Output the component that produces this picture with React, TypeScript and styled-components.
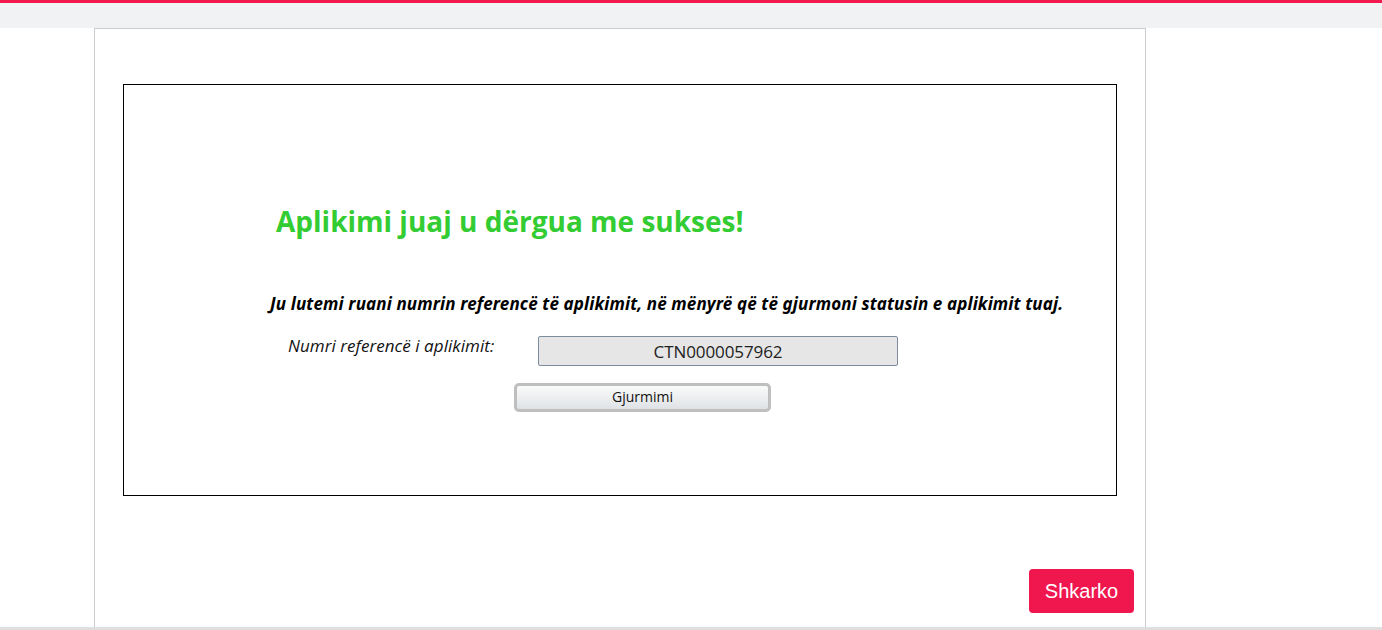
import React from "react";
import styled, { createGlobalStyle } from "styled-components";

const Global = createGlobalStyle`
  html, body { margin: 0; padding: 0; background: #fff; }
  body { font-family: "Open Sans", "Noto Sans", sans-serif; }
`;

const Page = styled.div`
  display: flex;
  flex-direction: column;
  min-height: 630px;
`;

const TopBar = styled.header`
  height: 25px;
  border-top: 3px solid #f2194f;
  background: #f1f2f4;
`;

const Main = styled.main`
  display: flex;
  padding-left: 94px;
`;

const Card = styled.section`
  box-sizing: border-box;
  width: 1052px;
  height: 599px;
  border: 1px solid #cccccc;
  border-bottom-width: 0;
  padding: 55px 28px 0 28px;
  display: flex;
  flex-direction: column;
`;

const Frame = styled.div`
  box-sizing: border-box;
  width: 994px;
  height: 412px;
  border: 1px solid #000;
  display: flex;
  flex-direction: column;
  padding-top: 118px;
`;

const Title = styled.h1`
  margin: 0 0 0 152px;
  font-family: "Open Sans", sans-serif;
  font-weight: 700;
  font-size: 28px;
  line-height: 36px;
  color: #33cc33;
  letter-spacing: 0;
`;

const Notice = styled.p`
  margin: 55px 0 0 146px;
  font-family: "Noto Sans", sans-serif;
  font-style: italic;
  font-weight: 700;
  font-size: 17px;
  line-height: 20px;
  letter-spacing: 0.13px;
  color: #000;
`;

const Row = styled.div`
  display: flex;
  align-items: flex-start;
  margin: 22px 0 0 164px;
`;

const Label = styled.span`
  width: 250px;
  font-family: "Open Sans", sans-serif;
  font-style: italic;
  font-size: 17px;
  line-height: 20px;
  color: #111;
  letter-spacing: 0.05px;
`;

const RefBox = styled.div`
  box-sizing: border-box;
  width: 360px;
  height: 30px;
  background: #e6e6e6;
  border: 1px solid #7d8c9c;
  border-radius: 2px;
  display: flex;
  align-items: center;
  justify-content: center;
  font-family: "Open Sans", sans-serif;
  font-size: 17px;
  color: #222;
  letter-spacing: -0.1px;
`;

const ActionRow = styled.div`
  display: flex;
  margin: 17px 0 0 390px;
`;

const TrackButton = styled.button`
  box-sizing: border-box;
  width: 257px;
  height: 29px;
  border: 3px solid #bfbfbf;
  border-radius: 5px;
  background: linear-gradient(#fafbfb, #dfe2e5);
  font-family: "Open Sans", sans-serif;
  font-size: 14px;
  color: #111;
  padding: 0 0 2px 0;
  cursor: pointer;
`;

const Footer = styled.div`
  margin-top: auto;
  display: flex;
  justify-content: flex-end;
  padding: 0 0 14px 0;
  margin-right: -17px;
`;

const DownloadButton = styled.button`
  width: 105px;
  height: 44px;
  border: none;
  border-radius: 4px;
  background: #f0174f;
  color: #fff;
  font-family: "Liberation Sans", Arial, sans-serif;
  font-size: 20px;
  padding: 0;
  cursor: pointer;
`;

const BottomStrip = styled.div`
  height: 3px;
  background: #dedede;
`;

export default function App() {
  return (
    <Page>
      <Global />
      <TopBar />
      <Main>
        <Card>
          <Frame>
            <Title>Aplikimi juaj u dërgua me sukses!</Title>
            <Notice>
              Ju lutemi ruani numrin referencë të aplikimit, në mënyrë që të gjurmoni statusin e aplikimit tuaj.
            </Notice>
            <Row>
              <Label>Numri referencë i aplikimit:</Label>
              <RefBox>CTN0000057962</RefBox>
            </Row>
            <ActionRow>
              <TrackButton>Gjurmimi</TrackButton>
            </ActionRow>
          </Frame>
          <Footer>
            <DownloadButton>Shkarko</DownloadButton>
          </Footer>
        </Card>
      </Main>
      <BottomStrip />
    </Page>
  );
}
